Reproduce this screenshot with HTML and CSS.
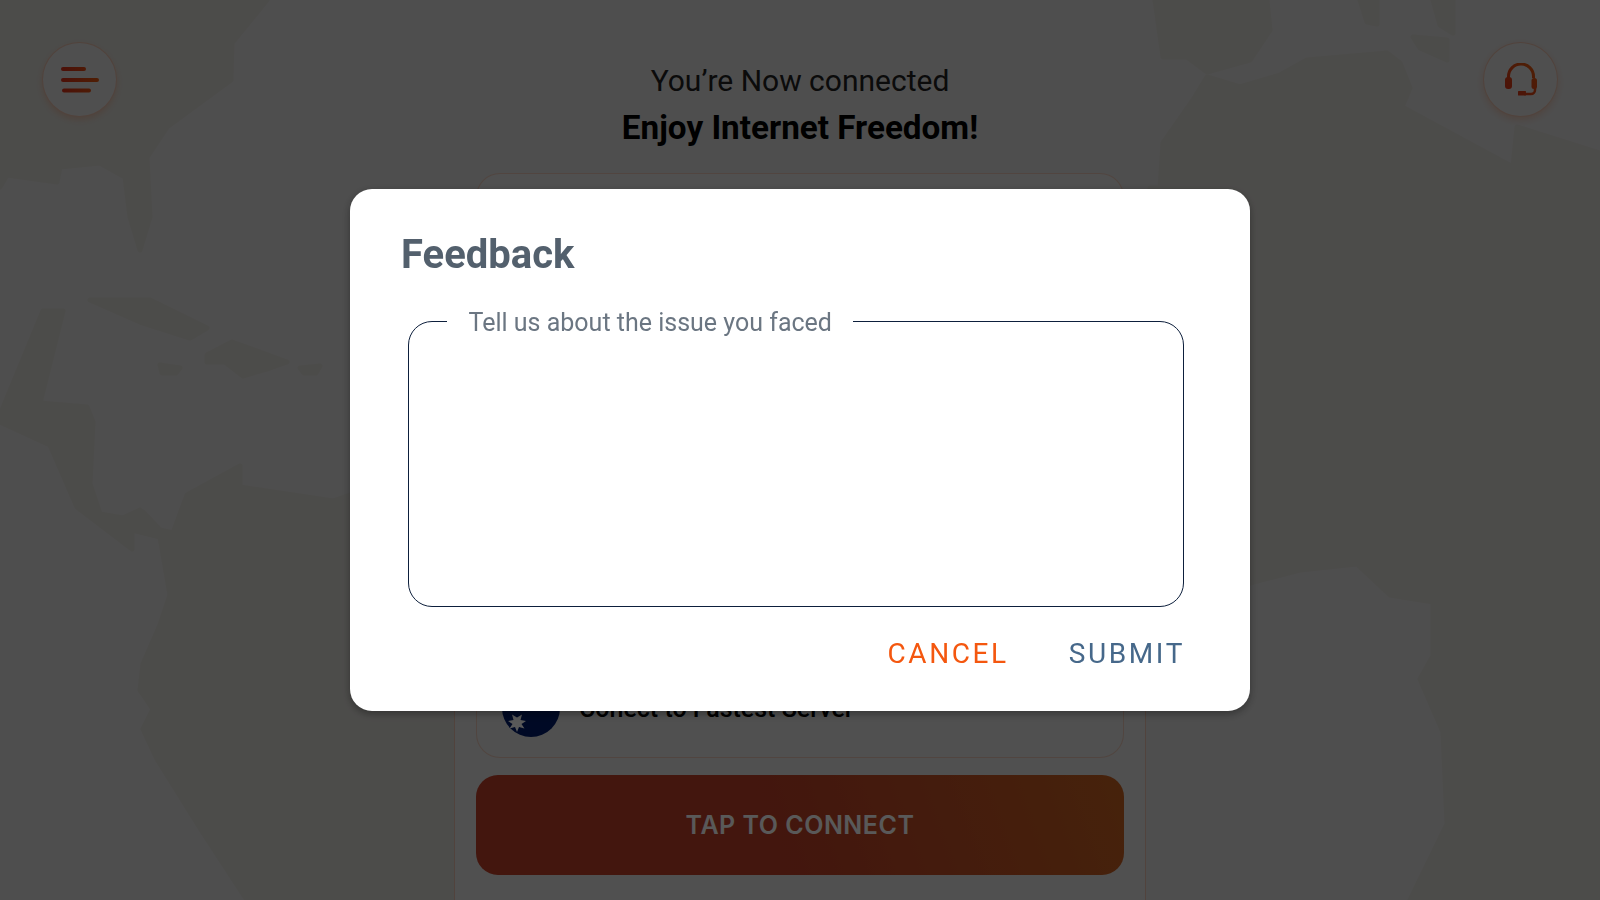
FILE: index.html
```html
<!DOCTYPE html>
<html lang="en">
<head>
  <meta charset="UTF-8">
  <meta name="viewport" content="width=device-width, initial-scale=1.0">
  <title>Feedback</title>
  <link rel="stylesheet" href="styles.css">
</head>
<body>
  <div class="screen">
    <svg class="map" viewBox="0 0 1600 900" aria-hidden="true">
      <path d="M0 0L267 0L232 43L231 80L167 127L147 157L150 217L140 250L130 217L125 177L100 163L60 167L57 182L7 175L0 187Z"/>
      <path d="M43 311L63 311L40 403L87 407L93 422L90 484L100 514L123 518L140 510L132 533L132 549L77 507L50 445L0 422L0 415Z"/>
      <path d="M90 300L150 300L207 328L190 338L140 322Z"/>
      <path d="M207 355L232 342L287 362L270 368L243 376L225 362L207 362Z"/>
      <path d="M160 365L180 368L176 373L162 373Z"/>
      <path d="M300 368L320 366L316 373L304 373Z"/>
      <path d="M240 466L187 495L173 533L160 530L143 512L132 530L160 537L170 595L160 625L143 664L140 690L153 709L143 729L157 759L200 828L247 900L470 900L470 495L350 495L333 501L240 487Z"/>
      <path d="M1155 0L1267 0L1270 30L1250 60L1207 72L1187 57L1163 57Z"/>
      <path d="M1160 188L1163 143L1193 100L1207 77L1240 87L1280 75L1307 60L1387 53L1400 63L1410 88L1402 107L1513 167L1517 127L1600 153L1600 900L1410 900L1447 824L1443 732L1420 679L1433 656L1433 602L1390 595L1357 564L1300 570L1250 583L1150 560L1150 188Z"/>
      <path d="M1413 37L1447 40L1447 60L1420 48Z"/>
      <path d="M1360 0L1377 0L1377 24L1367 22Z"/>
      <path d="M1433 0L1453 0L1453 33L1440 25Z"/>
    </svg>

    <header class="topbar">
      <button class="round-btn" aria-label="Menu">
        <svg width="38" height="26" viewBox="0 0 38 26">
          <defs>
            <linearGradient id="iconfill" gradientUnits="userSpaceOnUse" x1="0" y1="0" x2="38" y2="0">
              <stop offset="0" stop-color="#d8301a"/>
              <stop offset="1" stop-color="#e25810"/>
            </linearGradient>
          </defs>
          <g stroke="url(#iconfill)" stroke-width="4" stroke-linecap="round">
            <line x1="2" y1="2" x2="23" y2="2"/>
            <line x1="2" y1="13" x2="36" y2="13"/>
            <line x1="3" y1="23.500" x2="28" y2="23.500"/>
          </g>
        </svg>
      </button>
      <div class="status">
        <p class="status-line">You’re Now connected</p>
        <p class="status-head">Enjoy Internet Freedom!</p>
      </div>
      <button class="round-btn" aria-label="Support">
        <svg width="32" height="33" viewBox="0 0 32 33">
          <defs>
            <linearGradient id="headset" gradientUnits="userSpaceOnUse" x1="0" y1="32" x2="32" y2="0">
              <stop offset="0" stop-color="#d8301a"/>
              <stop offset="1" stop-color="#e26010"/>
            </linearGradient>
          </defs>
          <path d="M3.500 15V13.500A12.500 12.500 0 0 1 28.500 13.500V15" fill="none" stroke="url(#headset)" stroke-width="3"/>
          <rect x="0" y="14" width="7" height="12" rx="3" fill="url(#headset)"/>
          <rect x="26.500" y="15" width="5.500" height="11" rx="2.500" fill="url(#headset)"/>
          <path d="M30 25V27A4 4 0 0 1 26 31H19" fill="none" stroke="url(#headset)" stroke-width="2.500"/>
          <rect x="13" y="28" width="8" height="4.500" rx="0.500" fill="url(#headset)"/>
        </svg>
      </button>
    </header>

    <main class="column">
      <section class="server-card">
        <div class="server-row">
          <svg class="flag" width="58" height="58" viewBox="0 0 58 58">
            <circle cx="29" cy="29" r="29" fill="#001c6a"/>
            <polygon fill="#fff" points="14,34 16,39.500 21,36.500 19.500,42 25,43 20.500,46 23.500,50.500 18,49 16,54 14,49 8.500,50.500 11.500,46 7,43 12.500,42 11,36.500 16,39.500" transform="translate(-1 -1)"/>
          </svg>
          <span class="server-name">Conect to Fastest Server</span>
        </div>
      </section>
      <button class="connect-btn">TAP TO CONNECT</button>
    </main>
  </div>

  <div class="overlay">
    <form class="dialog">
      <h2 class="dialog-title">Feedback</h2>
      <fieldset class="issue-box">
        <legend>Tell us about the issue you faced</legend>
        <textarea class="issue-input" aria-label="Tell us about the issue you faced"></textarea>
      </fieldset>
      <div class="dialog-actions">
        <button type="button" class="text-btn cancel">CANCEL</button>
        <button type="submit" class="text-btn submit">SUBMIT</button>
      </div>
    </form>
  </div>
</body>
</html>
```

FILE: styles.css
```css
body {
  font-family: Roboto, sans-serif;
  margin: 0;
  background-color: #dfdfdf;
  overflow: hidden;
}
button {
  font-family: inherit;
}
.screen {
  position: relative;
  height: 900px;
  overflow: hidden;
}
.map {
  position: absolute;
  top: 0;
  left: 0;
  width: 1600px;
  height: 900px;
  fill: #dbdad5;
  stroke: #dbdad5;
  stroke-width: 5px;
  stroke-linejoin: round;
}
.topbar {
  position: relative;
  display: flex;
  justify-content: space-between;
  align-items: flex-start;
  box-sizing: border-box;
  height: 173px;
  padding: 42px 42px 0;
}
.round-btn {
  display: flex;
  align-items: center;
  justify-content: center;
  width: 75px;
  height: 75px;
  padding: 0;
  background-color: #e3e3e3;
  border: 1px solid rgba(240,110,50,0.3);
  border-radius: 50%;
  box-shadow: 0 3px 6px rgba(240,110,50,0.25);
}
.status {
  text-align: center;
  margin-top: 15px;
}
.status-line {
  margin: 0;
  font-size: 30px;
  line-height: 47px;
  color: #222;
}
.status-head {
  margin: 0;
  font-size: 33.250px;
  font-weight: 700;
  line-height: 47px;
  color: #000;
}
.column {
  position: relative;
  width: 648px;
  margin: 0 auto;
}
.column::before {
  content: "";
  position: absolute;
  top: 60px;
  bottom: -40px;
  left: -22px;
  right: -22px;
  background-color: #e5e5e5;
  border-left: 1px solid rgba(240,110,50,0.3);
  border-right: 1px solid rgba(240,110,50,0.3);
}
.server-card {
  position: relative;
  display: flex;
  flex-direction: column;
  justify-content: flex-end;
  box-sizing: border-box;
  height: 585px;
  padding: 0 25px 20px;
  background-color: #e5e5e5;
  border: 1px solid rgba(240,110,50,0.25);
  border-radius: 24px;
}
.server-row {
  display: flex;
  align-items: center;
  gap: 19px;
}
.server-name {
  font-size: 25px;
  font-weight: 500;
  color: #000;
}
.connect-btn {
  position: relative;
  display: block;
  width: 648px;
  height: 100px;
  margin-top: 17px;
  background: linear-gradient(70deg, #bf3f28 45%, #c96322 100%);
  color: #fff;
  font-family: Inter, sans-serif;
  font-size: 25px;
  font-weight: 600;
  letter-spacing: 0.500px;
  border: none;
  border-radius: 22px;
}
.overlay {
  position: fixed;
  top: 0;
  left: 0;
  right: 0;
  bottom: 0;
  display: flex;
  align-items: center;
  justify-content: center;
  background-color: rgba(0,0,0,0.65);
}
.dialog {
  box-sizing: border-box;
  width: 900px;
  height: 522px;
  padding: 42px 66px 0 51px;
  background-color: white;
  border-radius: 22px;
  box-shadow: 0 3px 8px rgba(0,0,0,0.35);
}
.dialog-title {
  margin: 0;
  font-size: 40px;
  font-weight: 700;
  line-height: 48px;
  color: #53606d;
}
.issue-box {
  box-sizing: border-box;
  height: 303px;
  margin: 25px 0 0 7px;
  padding: 0;
  border: 1px solid #0d1f3c;
  border-radius: 24px;
}
.issue-box legend {
  margin-left: 38px;
  padding: 4px 21.500px 0;
  font-size: 25px;
  line-height: 30px;
  color: #6b7682;
}
.issue-input {
  display: block;
  box-sizing: border-box;
  width: 100%;
  height: 100%;
  padding: 12px 24px;
  border: none;
  outline: none;
  resize: none;
  background: transparent;
}
.dialog-actions {
  display: flex;
  justify-content: flex-end;
  gap: 60px;
  margin: 31px -1px 0 0;
}
.text-btn {
  padding: 0;
  border: none;
  background: none;
  font-size: 28px;
  line-height: 32px;
  letter-spacing: 2.600px;
}
.cancel {
  color: #f4570f;
}
.submit {
  color: #46688a;
}
```
